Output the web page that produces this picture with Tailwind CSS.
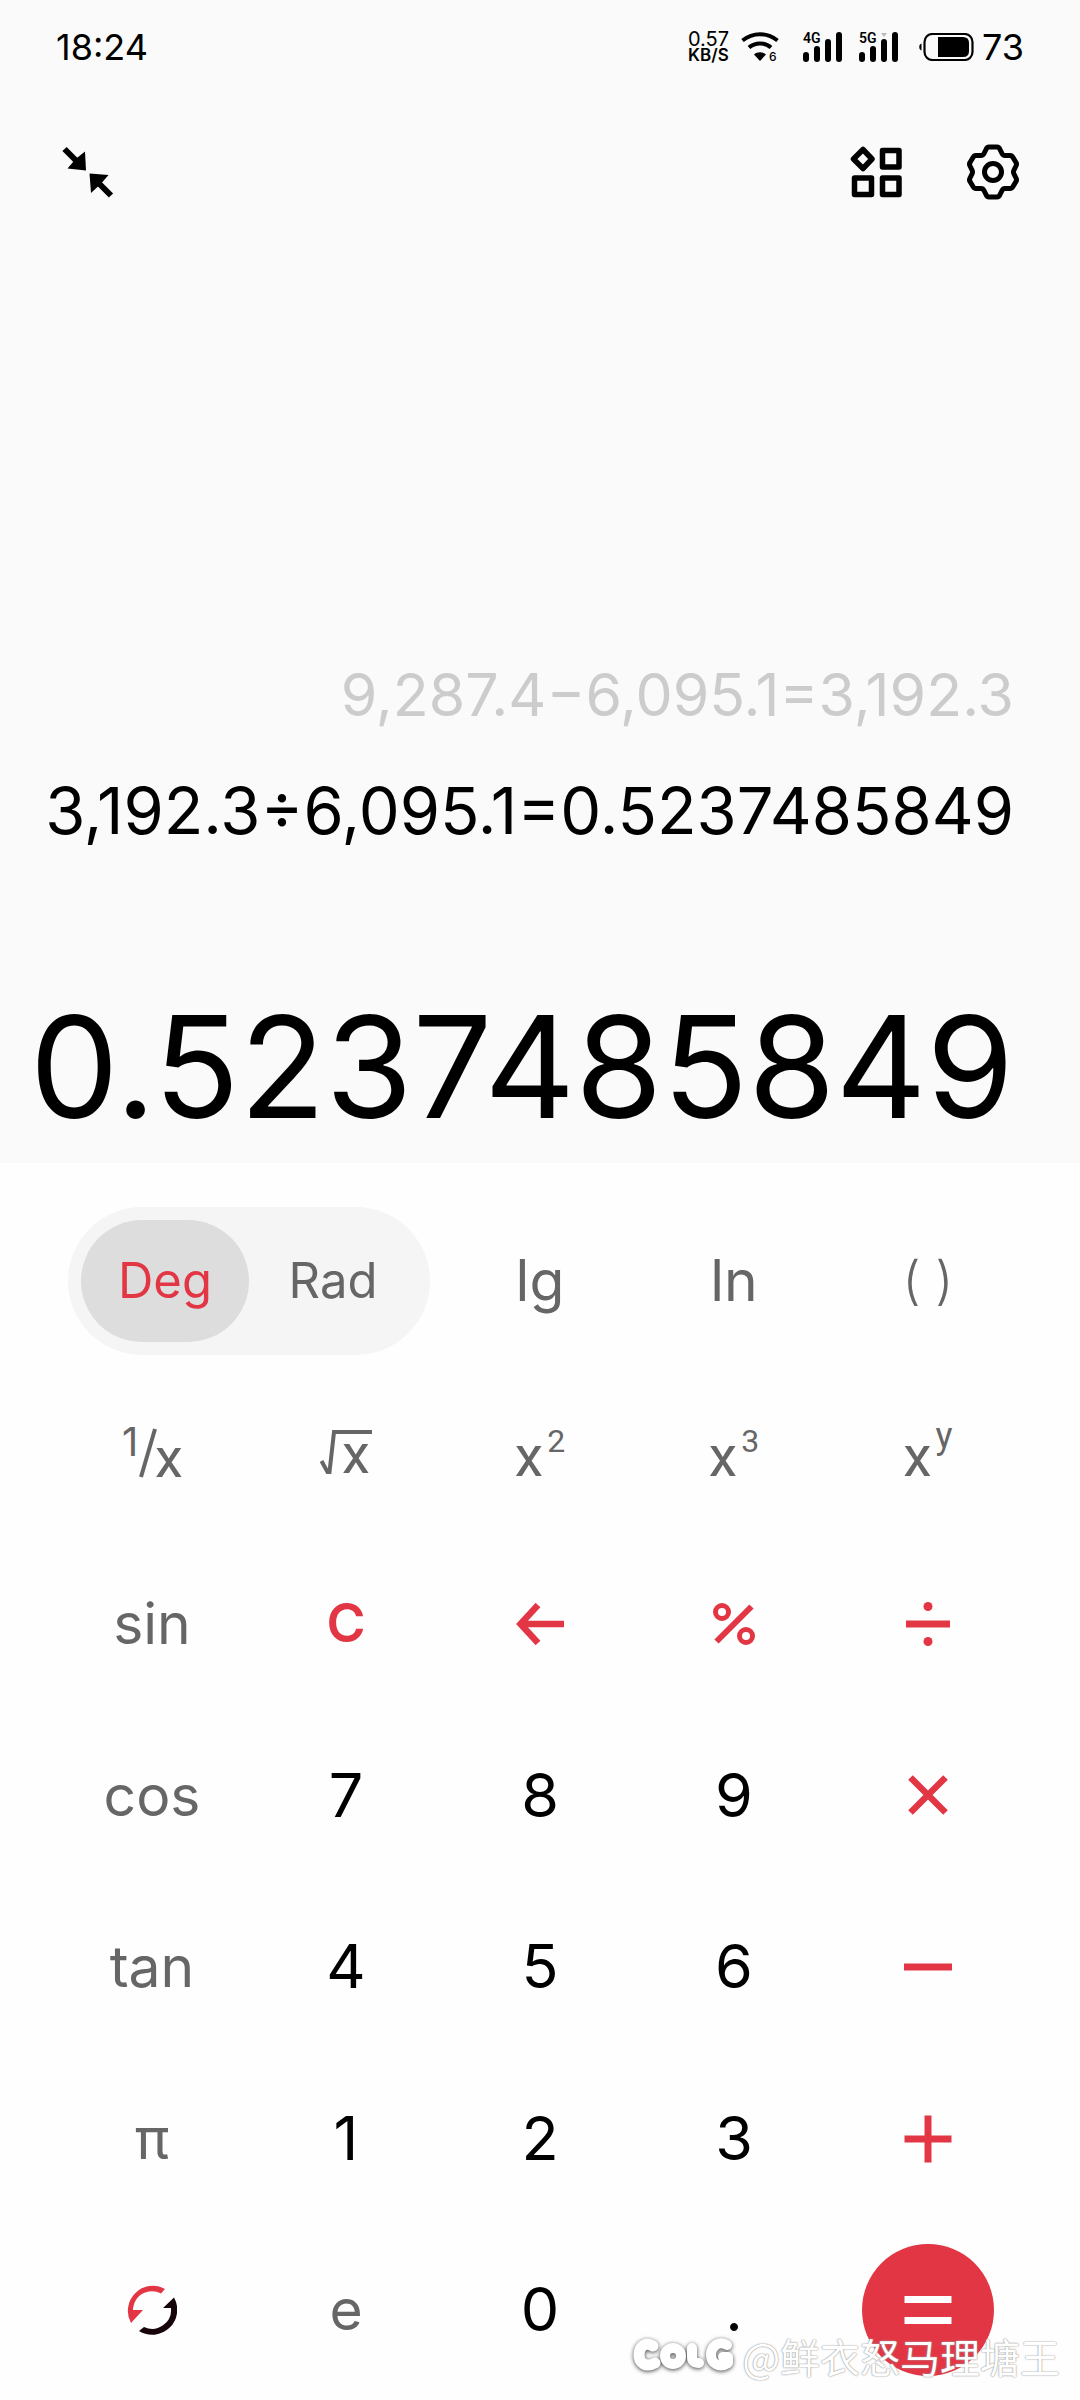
<!DOCTYPE html>
<html lang="en">
<head>
    <meta charset="UTF-8">
    <meta name="viewport" content="width=device-width, initial-scale=1.0">
    <title>Calculator</title>
    <script src="https://cdn.jsdelivr.net/npm/@tailwindcss/browser@4"></script>
</head>
<body class="relative min-h-screen flex flex-col bg-[#fefefe] text-black font-[Inter,'Noto_Sans_CJK_SC',sans-serif]">

    <!-- Display -->
    <div class="bg-[#fafafa] flex flex-col">
        <div class="flex items-center justify-between h-[94px] px-14">
            <div class="text-[36px] leading-none">18:24</div>
            <div class="flex items-center">
                <div class="text-center mr-3">
                    <div class="text-[20px] leading-4">0.57</div>
                    <div class="text-[17px] leading-4 font-semibold">KB/S</div>
                </div>
                <svg class="w-[38px] h-[30px] mr-6 overflow-visible" viewBox="0 0 38 30" fill="none" stroke="#000" stroke-width="4">
                    <path d="M1.500 8.500C12 0 26 0 36.500 8.500"/>
                    <path d="M8 15.500C14 10 24 10 30 15.500"/>
                    <path d="M13 22.500C16 19.500 22 19.500 25 22.500L19 29Z" fill="#000" stroke="none"/>
                    <text x="28" y="29" font-size="12" font-weight="500" fill="#000" stroke="none">6</text>
                </svg>
                <svg class="w-10 h-[30px] mr-4 overflow-visible" viewBox="0 0 40 30">
                    <text x="0" y="11" font-size="14" font-weight="600" font-family="Roboto">4G</text>
                    <rect x="0" y="20" width="6" height="10" rx="3"/>
                    <rect x="11" y="14" width="6" height="16" rx="3"/>
                    <rect x="22" y="7" width="6" height="23" rx="3"/>
                    <rect x="33" y="0" width="6" height="30" rx="3"/>
                </svg>
                <svg class="w-10 h-[30px] mr-5 overflow-visible" viewBox="0 0 40 30">
                    <text x="0" y="11" font-size="14" font-weight="600" font-family="Roboto">5G</text>
                    <path d="M22 1h6l-3 4z" fill="#bbb"/>
                    <rect x="0" y="20" width="6" height="10" rx="3"/>
                    <rect x="11" y="14" width="6" height="16" rx="3"/>
                    <rect x="22" y="7" width="6" height="23" rx="3"/>
                    <rect x="33" y="0" width="6" height="30" rx="3"/>
                </svg>
                <svg class="w-[55px] h-7 mr-2" viewBox="0 0 55 28">
                    <path d="M2.500 10.500v7C-.5 17-.5 11 2.500 10.500z"/>
                    <rect x="5.500" y="1" width="48" height="26" rx="8" fill="none" stroke="#000" stroke-width="2.200"/>
                    <path d="M19 4h25q6 0 6 6v8q0 6-6 6H19z"/>
                </svg>
                <div class="text-[36px] leading-none">73</div>
            </div>
        </div>

        <div class="flex items-center h-[156px] px-[60px]">
            <button type="button" aria-label="Minimize" class="mr-auto">
                <svg class="w-14 h-14" viewBox="0 0 56 56">
                    <path d="M4.500 5 16 16.500" stroke="#000" stroke-width="6"/>
                    <path d="M26 26.500 25 7.500 17.500 13.500 13.500 17.500 7.500 24.500z"/>
                    <path d="M51 51.500 39.500 40" stroke="#000" stroke-width="6"/>
                    <path d="M29.500 29.500 48.500 31 42.500 38 38 42.500 31 49z"/>
                </svg>
            </button>
            <button type="button" aria-label="Tools" class="mr-16">
                <svg class="w-[52px] h-[52px]" viewBox="0 0 52 52" fill="none" stroke="#000" stroke-width="5.500" stroke-linejoin="round">
                    <path d="M13 3.500 22 13 13 22.500 3.500 13z"/>
                    <path d="M32.500 4.500h16.500v16.500H32.500zM4.500 32h17v16.500H4.500zM32.500 32h16.500v16.500H32.500z"/>
                </svg>
            </button>
            <button type="button" aria-label="Settings">
                <svg class="w-[54px] h-14" viewBox="0 0 54 56" fill="none" stroke="#000" stroke-width="5" stroke-linejoin="round">
                    <path d="M23 3h8q2 0 3 2.500l2 4q1 2 3 2h5q2 0 3 2l3 5q1 1.500 0 3.500l-2 4q-1 2 0 4l2 4q1 2 0 3.500l-3 5q-1 2-3 2h-5q-2 0-3 2l-2 4q-1 2.500-3 2.500h-8q-2 0-3-2.500l-2-4q-1-2-3-2h-5q-2 0-3-2l-3-5q-1-1.500 0-3.500l2-4q1-2 0-4l-2-4q-1-2 0-3.500l3-5q1-2 3-2h5q2 0 3-2l2-4q1-2.500 3-2.500z"/>
                    <circle cx="27" cy="28" r="8.500"/>
                </svg>
            </button>
        </div>

        <div class="flex flex-col items-end pt-[405px] pr-[66px] pb-2.5 whitespace-nowrap">
            <div class="text-[59px] leading-[80px] text-[#cccccc]">9,287.4−6,095.1=3,192.3</div>
            <div class="text-[65px] leading-[80px] mt-9">3,192.3÷6,095.1=0.5237485849</div>
            <output class="text-[141px] leading-[172px] mt-[130px]">0.5237485849</output>
        </div>
    </div>

    <!-- Keypad -->
    <div class="grow grid grid-cols-5 auto-rows-fr px-[55px] pt-8 pb-1 text-[61px]">
        <div class="col-span-2 flex items-center justify-center">
            <div class="flex p-[13px] rounded-full bg-[#f5f5f5] text-[49px]">
                <input type="radio" name="angle" id="deg" class="sr-only peer/deg" checked>
                <label for="deg" class="w-[168px] h-[122px] flex items-center justify-center rounded-full text-[#666666] peer-checked/deg:bg-[#dddddd] peer-checked/deg:text-[#e23645]">Deg</label>
                <input type="radio" name="angle" id="rad" class="sr-only peer/rad">
                <label for="rad" class="w-[168px] h-[122px] flex items-center justify-center rounded-full text-[#666666] peer-checked/rad:bg-[#dddddd] peer-checked/rad:text-[#e23645]">Rad</label>
            </div>
        </div>
        <button type="button" class="text-[57px] text-[#666666]">lg</button>
        <button type="button" class="text-[57px] text-[#666666]">ln</button>
        <button type="button" class="text-[52px] text-[#666666] font-light">( )</button>

        <button type="button" aria-label="Reciprocal" class="flex items-center justify-center text-[#666666]">
            <svg class="w-[60px] h-[52px] overflow-visible" viewBox="0 0 60 52" fill="currentColor">
                <text x="0" y="30" font-size="40">1</text>
                <path d="M33 3 19 51" stroke="currentColor" stroke-width="4"/>
                <text x="33" y="51" font-size="56" font-family="Roboto">x</text>
            </svg>
        </button>
        <button type="button" aria-label="Square root" class="flex items-center justify-center text-[#666666]">
            <svg class="w-[52px] h-[46px] overflow-visible" viewBox="0 0 52 46" fill="currentColor">
                <path d="M1.500 32 7.500 43h2L14 3h38" fill="none" stroke="currentColor" stroke-width="4"/>
                <text x="22" y="44" font-size="56" font-family="Roboto">x</text>
            </svg>
        </button>
        <button type="button" class="pt-2 text-[57px] text-[#666666] font-[Roboto]">x<sup class="text-[32px] ml-1 -top-6">2</sup></button>
        <button type="button" class="pt-2 text-[57px] text-[#666666] font-[Roboto]">x<sup class="text-[32px] ml-1 -top-6">3</sup></button>
        <button type="button" class="pt-2 text-[57px] text-[#666666] font-[Roboto]">x<sup class="text-[36px] ml-1 -top-7">y</sup></button>

        <button type="button" class="text-[57px] text-[#666666]">sin</button>
        <button type="button" class="text-[53px] text-[#e23645] font-semibold">C</button>
        <button type="button" aria-label="Backspace" class="flex items-center justify-center text-[#e23645]">
            <svg class="w-12 h-[42px]" viewBox="0 0 48 42" fill="none" stroke="currentColor" stroke-width="6.500">
                <path d="M22 2 4.500 21 22 40M5 21h43"/>
            </svg>
        </button>
        <button type="button" aria-label="Percent" class="flex items-center justify-center text-[#e23645]">
            <svg class="w-[42px] h-[42px]" viewBox="0 0 42 42" fill="none" stroke="currentColor">
                <circle cx="9" cy="9" r="6.500" stroke-width="5"/>
                <circle cx="33" cy="33" r="6.500" stroke-width="5"/>
                <path d="M38.500 3.500 3.500 38.500" stroke-width="6"/>
            </svg>
        </button>
        <button type="button" aria-label="Divide" class="flex items-center justify-center text-[#e23645]">
            <svg class="w-11 h-11" viewBox="0 0 44 44" fill="currentColor">
                <circle cx="22" cy="4.500" r="4.500"/>
                <path d="M0 18.500h44v7H0z"/>
                <circle cx="22" cy="39.500" r="4.500"/>
            </svg>
        </button>

        <button type="button" class="text-[57px] text-[#666666]">cos</button>
        <button type="button">7</button>
        <button type="button">8</button>
        <button type="button">9</button>
        <button type="button" aria-label="Multiply" class="flex items-center justify-center text-[#e23645]">
            <svg class="w-10 h-10" viewBox="0 0 40 40" stroke="currentColor" stroke-width="6.500">
                <path d="M2.500 2.500l35 35M37.500 2.500l-35 35"/>
            </svg>
        </button>

        <button type="button" class="text-[57px] text-[#666666]">tan</button>
        <button type="button">4</button>
        <button type="button">5</button>
        <button type="button">6</button>
        <button type="button" aria-label="Minus" class="flex items-center justify-center text-[#e23645]">
            <svg class="w-12 h-12" viewBox="0 0 48 48" stroke="currentColor" stroke-width="7">
                <path d="M0 24h48"/>
            </svg>
        </button>

        <button type="button" class="text-[57px] text-[#666666]">π</button>
        <button type="button">1</button>
        <button type="button">2</button>
        <button type="button">3</button>
        <button type="button" aria-label="Plus" class="flex items-center justify-center text-[#e23645]">
            <svg class="w-12 h-12" viewBox="0 0 48 48" stroke="currentColor" stroke-width="7">
                <path d="M0.500 24h47M24 0.500v47"/>
            </svg>
        </button>

        <button type="button" aria-label="Switch keypad" class="flex items-center justify-center">
            <svg class="w-[50px] h-[50px]" viewBox="0 0 50 50">
                <path d="M38 4A25 25 0 0 0 4 38L16 25H6A19 19 0 0 1 34 8.500Z" fill="#e23645"/>
                <path d="M12 46A25 25 0 0 0 47 12.500L36 23H44A19 19 0 0 1 17 42Z" fill="#16040a"/>
            </svg>
        </button>
        <button type="button" class="text-[57px] text-[#666666]">e</button>
        <button type="button">0</button>
        <button type="button">.</button>
        <div class="flex items-center justify-center">
            <button type="button" aria-label="Equals" class="w-[132px] h-[132px] shrink-0 flex items-center justify-center rounded-full bg-[#e23645] text-white">
                <svg class="w-12 h-7" viewBox="0 0 48 28" fill="currentColor">
                    <path d="M0.500 0h47v7H0.500zM0.500 21h47v7H0.500z"/>
                </svg>
            </button>
        </div>
    </div>

    <!-- Watermark -->
    <div class="absolute right-5 bottom-6 flex items-center gap-1 pointer-events-none">
        <svg class="w-[106px] h-[38px] overflow-visible drop-shadow-[0_1px_2px_#444]" viewBox="0 0 106 38" fill="none" stroke="#fff" stroke-width="11" stroke-linecap="round" stroke-linejoin="round" aria-label="COLG">
            <path d="M21 9C13 4 7 10 7 18S14 31 23 26"/>
            <circle cx="41" cy="19" r="8" stroke-width="10"/>
            <path d="M60 11v9q0 6 7 6" stroke-width="10"/>
            <path d="M95 8C86 3 79 10 79 18S87 32 96 26V20H91" stroke-width="10"/>
        </svg>
        <span class="text-[40px] leading-none text-white font-['Noto_Sans_CJK_SC'] [text-shadow:0_0_1px_#888,0_0_2px_#aaa]">@鲜衣怒马理塘王</span>
    </div>
</body>
</html>
